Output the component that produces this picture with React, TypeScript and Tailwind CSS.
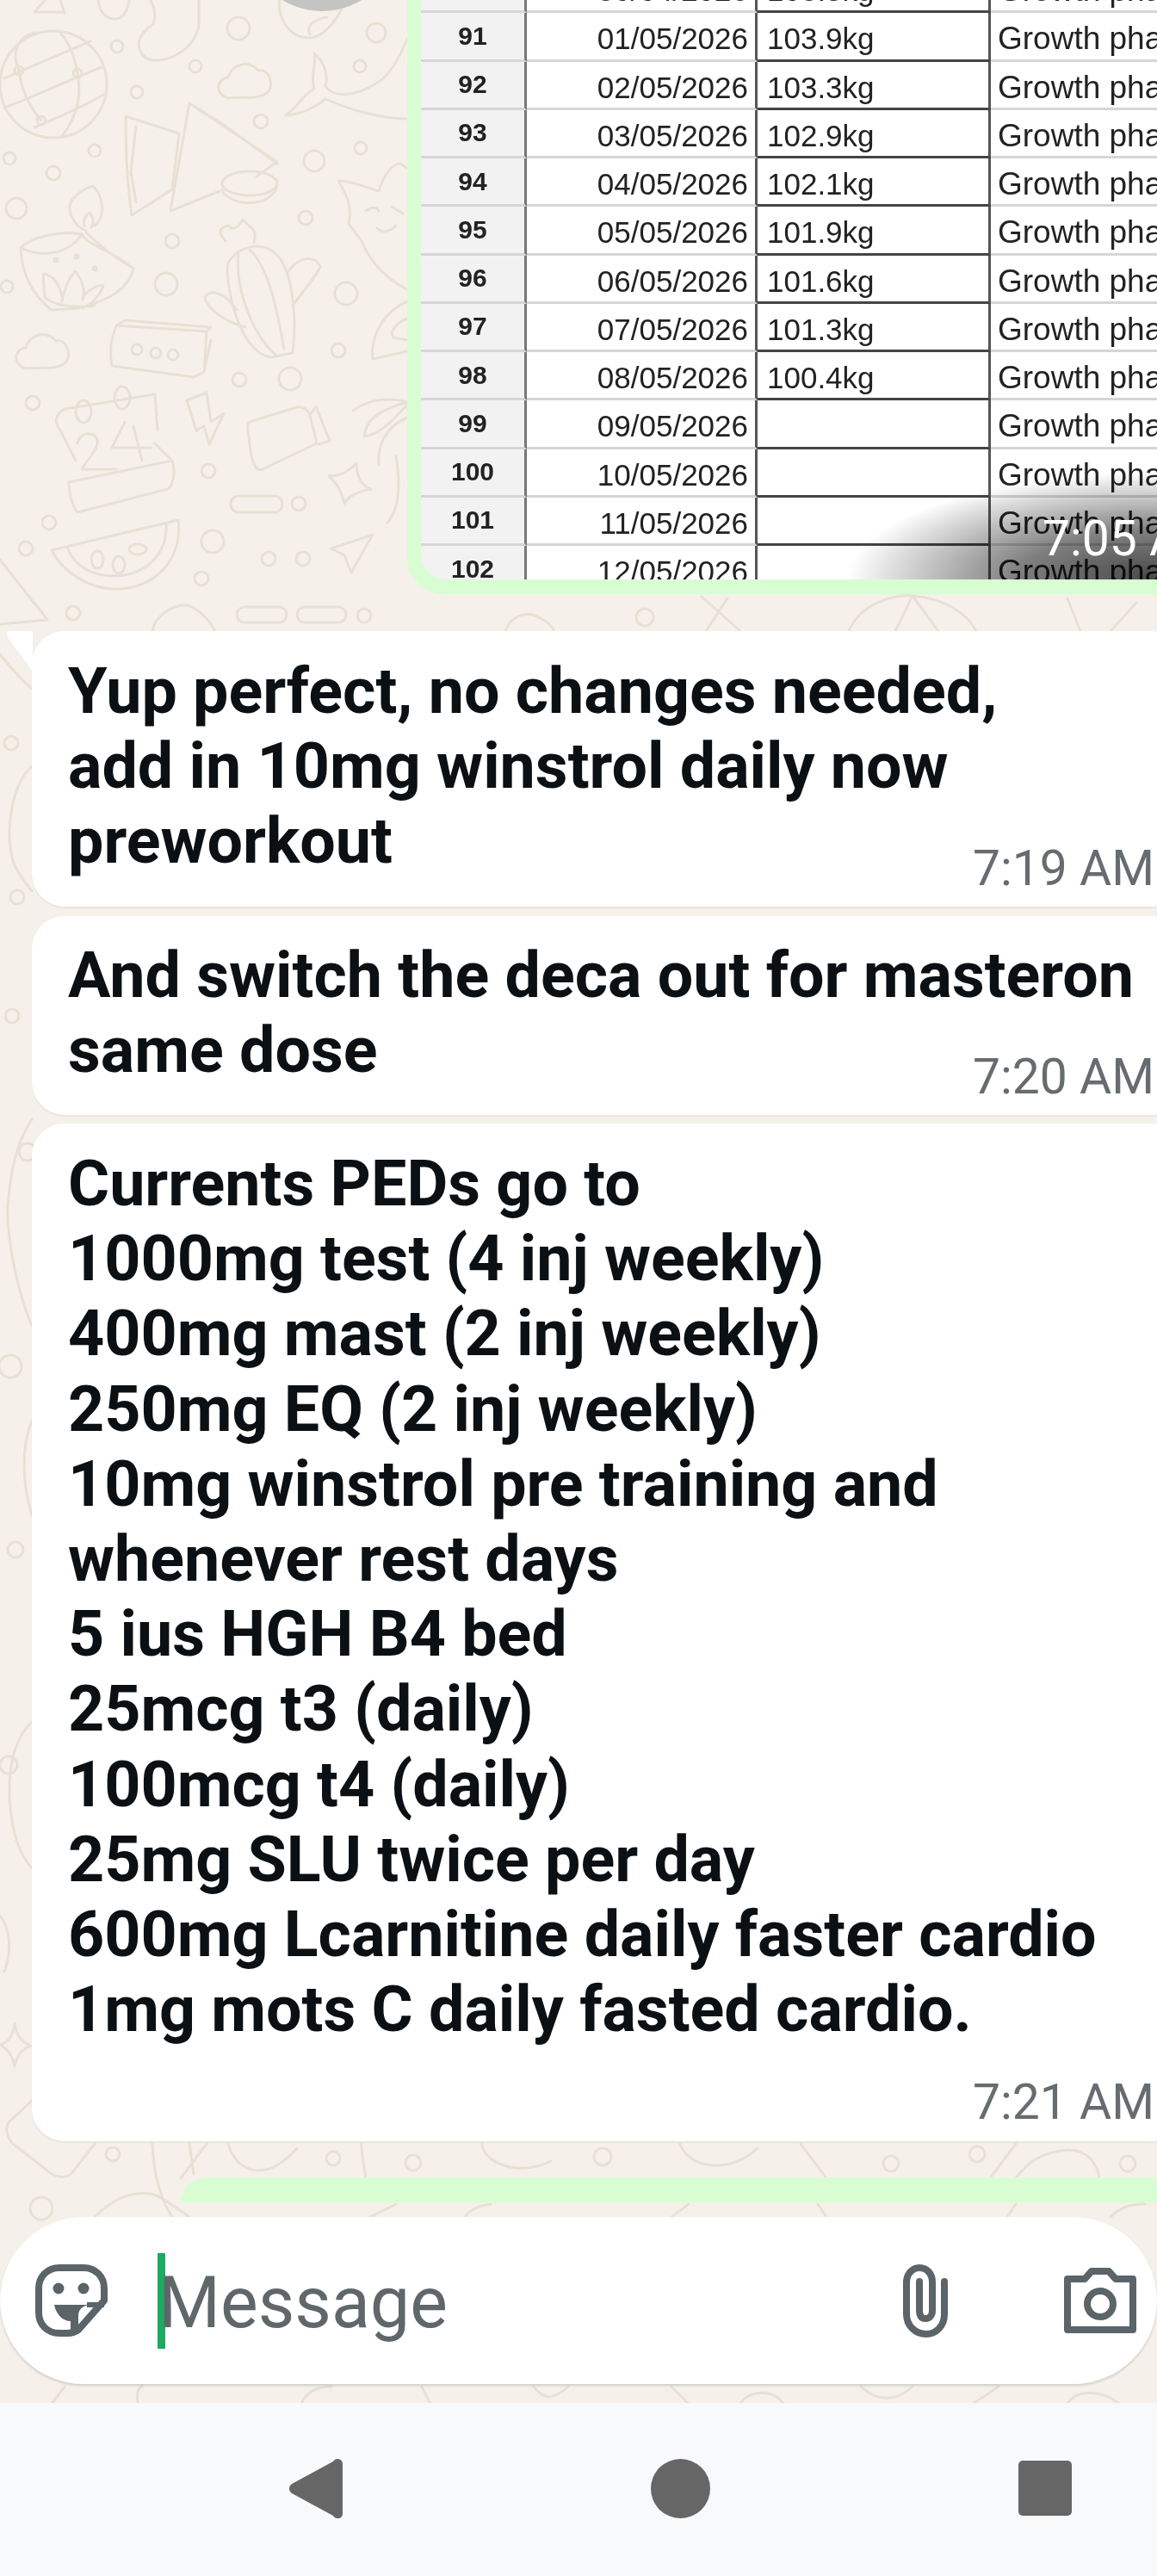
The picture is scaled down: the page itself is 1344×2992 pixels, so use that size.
import React from "react";

type Row = { no: number; date: string; weight: string };

const rows: Row[] = [
    { no: 90, date: "30/04/2026", weight: "103.5kg" },
    { no: 91, date: "01/05/2026", weight: "103.9kg" },
    { no: 92, date: "02/05/2026", weight: "103.3kg" },
    { no: 93, date: "03/05/2026", weight: "102.9kg" },
    { no: 94, date: "04/05/2026", weight: "102.1kg" },
    { no: 95, date: "05/05/2026", weight: "101.9kg" },
    { no: 96, date: "06/05/2026", weight: "101.6kg" },
    { no: 97, date: "07/05/2026", weight: "101.3kg" },
    { no: 98, date: "08/05/2026", weight: "100.4kg" },
    { no: 99, date: "09/05/2026", weight: "" },
    { no: 100, date: "10/05/2026", weight: "" },
    { no: 101, date: "11/05/2026", weight: "" },
    { no: 102, date: "12/05/2026", weight: "" },
];

const rings: [number, number, number][] = [
    [277, 33, 13], [136, 54, 7], [227, 77, 7], [159, 107, 7], [437, 38, 11], [418, 77, 7], [303, 141, 8],
    [419, 172, 7], [365, 187, 12], [110, 175, 7], [11, 184, 7], [62, 201, 8], [19, 242, 12], [200, 280, 8],
    [355, 253, 8], [8, 333, 7], [193, 330, 13], [402, 341, 13], [393, 407, 8], [278, 441, 8], [337, 440, 13],
    [38, 468, 8], [242, 547, 8], [347, 585, 8], [57, 607, 8], [30, 637, 8], [247, 629, 13], [312, 649, 8],
    [352, 649, 8], [234, 672, 8], [85, 712, 8], [423, 715, 8], [749, 717, 10], [13, 863, 8], [20, 1042, 8],
    [32, 1338, 10], [12, 1587, 13], [14, 1180, 8], [18, 1800, 9], [10, 2050, 10], [131, 2502, 8], [387, 2507, 8],
    [48, 2565, 13], [1035, 2513, 9], [1135, 2502, 9], [1310, 2513, 9], [480, 2512, 9], [700, 2505, 10],
];

// wallpaper line drawings, sits behind every bubble
function Wallpaper() {
    return (
        <svg className="absolute left-0 top-0" width="1344" height="2800" fill="none" stroke="#e8e0d5" strokeWidth="3" strokeLinecap="round" strokeLinejoin="round">
            {rings.map(([cx, cy, r]) => <circle key={`${cx}-${cy}`} cx={cx} cy={cy} r={r} />)}
            {/* globe */}
            <circle cx="62" cy="98" r="62" />
            <path d="M5 91C40 75 70 63 105 48M5 125C40 112 75 95 118 78M40 148C70 135 95 125 120 110M22 82C12 60 22 42 40 38M22 82C25 105 35 125 48 140M90 85C86 62 80 50 70 38M90 85C95 110 90 135 72 158" />
            <circle cx="22" cy="82" r="5" /><circle cx="90" cy="85" r="5" /><circle cx="48" cy="140" r="5" />
            {/* sock and the bits cut off at the top */}
            <path d="M175 0C182 15 180 22 178 28C160 40 155 55 170 68C190 76 225 60 231 30V0" />
            <path d="M40 14L52 0M75 15L70 0M40 14H75M114 0C115 15 125 22 133 22C142 22 148 15 150 0" />
            <path d="M325 0C322 20 335 43 358 44C375 44 390 25 397 10M360 40C355 30 365 22 380 20" />
            {/* clouds */}
            <path d="M265 114C250 110 250 92 265 90C268 76 288 68 300 82C312 78 320 100 310 108C300 116 280 112 265 114Z" />
            <path transform="translate(-235 314)" d="M265 114C250 110 250 92 265 90C268 76 288 68 300 82C312 78 320 100 310 108C300 116 280 112 265 114Z" />
            {/* whale */}
            <path d="M332 134C345 125 352 110 365 103C360 90 368 72 365 62C375 70 382 85 378 100C385 112 410 115 440 95C455 85 465 65 473 45M332 134C350 133 365 125 378 115C400 125 440 138 473 138" />
            {/* megaphone */}
            <path d="M146 135L208 155L200 220L153 250C148 215 146 175 146 135ZM158 147L152 200L158 235M220 120L322 188C312 195 305 200 298 205M220 120L198 245L255 222M225 123L260 145L322 190" />
            <ellipse cx="290" cy="213" rx="32" ry="14" />
            <path d="M258 220C262 238 315 245 322 215" />
            {/* diya */}
            <path d="M100 268C85 262 78 245 82 235C88 225 100 218 108 216C118 225 125 250 110 262M98 262C96 255 100 250 104 247C108 252 110 258 106 264" />
            <path d="M24 288C40 272 80 268 95 272C100 285 130 290 155 312C150 335 125 350 90 358L60 360C40 345 25 320 24 288ZM24 288C50 300 80 295 95 272M100 270C115 285 135 300 155 312" />
            <path d="M50 318C65 320 70 335 72 345M72 350C75 335 80 322 88 315C95 325 100 338 96 348M96 345C105 335 115 330 120 332C115 345 105 355 95 358M50 318L52 345C60 355 90 358 110 355" />
            <circle cx="65" cy="302" r="2" /><circle cx="89" cy="298" r="2" /><circle cx="110" cy="312" r="2" />
            {/* cactus */}
            <path d="M265 305C260 320 275 410 315 415L340 410C345 370 340 320 325 300C310 280 280 282 265 305ZM277 295C273 330 290 385 320 412M290 290C312 310 322 360 330 405M340 355C350 340 365 325 372 310C368 298 350 295 335 315M285 380C265 375 240 360 238 345C245 335 262 340 275 360M262 280C252 268 255 265 265 262C272 270 280 260 282 255C290 265 300 265 295 282" />
            {/* block with dots */}
            <path d="M135 378L240 385L237 432L225 438L130 425C127 410 128 395 135 378ZM135 378L145 372L245 380L240 385M237 432L245 395" />
            <circle cx="159" cy="406" r="6" /><circle cx="181" cy="410" r="6" /><circle cx="201" cy="412" r="6" />
            {/* calendar */}
            <path d="M75 475L180 458L183 500M75 475C65 480 62 490 70 500L88 535M80 560L200 535C205 550 200 565 195 568L90 595C85 590 80 575 80 560ZM180 515L200 535" />
            <ellipse cx="97" cy="478" rx="9" ry="13" /><ellipse cx="142" cy="462" rx="9" ry="13" />
            <path d="M90 515C92 500 115 500 113 515C112 525 100 535 95 545H135M145 490L130 520H175M155 495L165 535" />
            {/* bolt, jar, star */}
            <path d="M217 465L240 456L245 490L260 480L243 516L237 495L228 500Z" />
            <path d="M290 490L345 473C352 472 358 476 360 482L368 515L305 545C298 548 295 540 292 530L288 500C287 495 288 490 290 490ZM360 482L367 472L383 512L370 516" />
            <path d="M382 553C395 553 405 548 414 538C414 552 420 565 431 568C420 570 405 575 400 585C398 575 393 562 382 553Z" />
            <rect x="268" y="576" width="60" height="19" rx="9" />
            {/* palm, fan, fox */}
            <path d="M410 477C430 462 455 462 473 467M473 467C445 475 425 485 423 507C440 505 455 490 473 470M440 540C438 515 450 495 473 485M460 530C465 560 465 590 450 607" />
            <path d="M433 417C430 385 450 360 473 350M433 417L473 408M473 370C460 375 452 385 457 392L473 395" />
            <path d="M393 210C410 210 425 218 440 222C445 205 455 190 465 190L472 195M393 210C402 225 410 240 405 260L420 280C430 305 450 325 473 336M425 245C432 240 438 240 440 245M455 240L468 248M438 265C445 272 455 268 460 262" />
            {/* watermelon, paper plane */}
            <path d="M60 639L207 604C212 640 190 680 140 684C100 686 70 660 60 639ZM78 636C90 665 120 672 145 668C175 662 195 640 193 607" />
            <ellipse cx="113" cy="650" rx="7" ry="10" /><ellipse cx="138" cy="656" rx="7" ry="10" /><ellipse cx="160" cy="638" rx="10" ry="6" />
            <path d="M385 637L433 621L408 665L400 645Z" />
            {/* strip between the picture and the first message */}
            <path d="M0 650L43 705M0 725L55 720L40 700M177 733C180 715 200 703 215 703C225 703 240 715 250 733" />
            <rect x="275" y="705" width="58" height="18" rx="9" /><rect x="345" y="705" width="57" height="18" rx="9" />
            <path d="M587 733C592 718 605 712 618 714C630 718 640 725 644 733M815 693L860 733M820 733L845 695M986 733C1000 700 1040 690 1060 692C1100 695 1125 715 1134 733M1060 692L1040 733M1060 692L1090 733M1240 695L1255 733M1290 733L1320 700" />
            {/* left edge beside the bubbles */}
            <path d="M37 890C15 910 5 960 15 1000C20 1015 30 1025 37 1035M0 760C8 770 20 785 37 800M37 1300C25 1320 15 1340 10 1390C5 1430 20 1500 37 1540M37 1650C25 1680 25 1720 37 1760M37 2000C15 2020 8 2060 12 2100C16 2140 28 2160 37 2170M0 2225C12 2240 14 2265 5 2290" />
            <path d="M0 2375C10 2372 15 2365 17 2350C19 2365 25 2372 36 2376C25 2380 19 2390 17 2400C15 2390 10 2380 0 2375Z" />
            {/* strip under the last message */}
            <path d="M37 2440L10 2465C5 2475 10 2485 15 2490L60 2525C70 2530 80 2530 85 2522L110 2490M177 2490C178 2530 190 2560 200 2575M220 2490L225 2525M265 2490C275 2525 310 2535 345 2495M420 2490C420 2510 425 2520 425 2535M110 2575C130 2555 150 2545 175 2548C190 2552 205 2565 220 2575M240 2490L210 2530" />
            <path d="M1180 2530C1195 2510 1210 2500 1240 2497C1265 2497 1275 2515 1277 2530M560 2490C560 2510 600 2530 640 2510M790 2490C800 2520 850 2525 880 2495M930 2490L960 2530M1180 2490L1150 2530" />
            <path d="M430 2575L460 2560M540 2575C545 2568 555 2562 570 2560M780 2575L800 2560M950 2560L960 2575M1180 2560L1170 2575M1290 2575C1300 2565 1310 2560 1330 2560" />
            <path d="M60 2792L75 2772M160 2790C158 2780 160 2775 165 2771M350 2792C355 2780 365 2772 385 2772M500 2792L490 2772M620 2772C630 2785 640 2790 660 2772M780 2772L800 2792M860 2792C870 2775 900 2775 910 2792M1000 2772C1020 2790 1040 2790 1060 2772M1130 2792L1160 2772M1240 2792C1250 2775 1280 2775 1300 2792" />
        </svg>
    );
}

function SheetRow({ row }: { row: Row }) {
    return (
        <div className="grid grid-cols-[123px_268px_271px_1fr] h-[56.25px] text-[35px] leading-none text-[#222]">
            <div className="flex items-center justify-center bg-[#f2f2f2] border-r-[3px] border-b-[3px] border-r-[#777] border-b-[#d6d6d6] text-[30px] font-bold">{row.no}</div>
            <div className="flex items-center justify-end pt-[6px] pr-[8px] bg-white border-r-[3px] border-b-[3px] border-r-[#555] border-b-[#d6d6d6]">{row.date}</div>
            <div className="flex items-center pt-[6px] pl-[11px] bg-white border-r-[3px] border-b-[3px] border-r-[#555] border-b-[#444]">{row.weight}</div>
            <div className="flex items-center pt-[6px] pl-[8px] bg-white border-b-[3px] border-b-[#d6d6d6] text-[37px] whitespace-nowrap overflow-hidden">Growth phase</div>
        </div>
    );
}

function ImageBubble() {
    return (
        <div className="relative ml-[473px] h-[690px] shrink-0 bg-[#d9fdd3] rounded-bl-[42px] pl-[16px] pb-[17px]">
            <div className="relative h-full overflow-hidden rounded-bl-[28px]">
                <div className="-mt-[41px] blur-[0.6px] font-['Liberation_Sans',sans-serif]">
                    {rows.map(row => <SheetRow key={row.no} row={row} />)}
                </div>
                <div className="absolute right-0 bottom-0 w-[360px] h-[125px] bg-[radial-gradient(ellipse_farthest-side_at_bottom_right,rgba(0,0,0,0.72)_0%,rgba(0,0,0,0.5)_45%,rgba(0,0,0,0)_100%)]" />
                <span className="absolute left-[722px] bottom-[15px] text-[57px] leading-[64px] text-white whitespace-nowrap font-['Roboto',sans-serif]">7:05 AM</span>
            </div>
        </div>
    );
}

function TextBubble({ lines, time, tail, timeClass, className }: { lines: string[]; time: string; tail?: boolean; timeClass: string; className: string }) {
    return (
        <div className={`relative ml-[37px] -mr-[30px] shrink-0 bg-white rounded-[38px] pl-[42px] pr-[33px] shadow-[0_2px_2px_rgba(0,0,0,0.05)] ${className}`}>
            {tail && (
                <svg className="absolute -left-[29px] top-0" width="30" height="48" viewBox="0 0 30 48">
                    <path d="M30 0H3C0 0 -1 4 1 7L30 47Z" fill="#fff" />
                </svg>
            )}
            <div className="text-[73.6px] leading-[87.2px] font-bold text-[#0b1014] whitespace-nowrap">
                {lines.map(line => <div key={line}>{line}</div>)}
            </div>
            <div className={`flex justify-end text-[57px] leading-[64px] text-[#666c70] ${timeClass}`}>{time}</div>
        </div>
    );
}

function StickerIcon() {
    return (
        <svg width="85" height="85" viewBox="0 0 85 85" fill="none" stroke="#5b6468" strokeWidth="8">
            <path d="M28 4H56C70 4 80 14 80 28V42L50 76C46 79 42 80 38 80H28C14 80 4 70 4 56V28C4 14 14 4 28 4Z" strokeLinejoin="round" />
            <circle cx="27" cy="28" r="6.5" fill="#5b6468" stroke="none" />
            <circle cx="56" cy="28" r="6.5" fill="#5b6468" stroke="none" />
            <path d="M22 47H64C55 48 50 52 50 60V78H41V66C32 66 24 58 22 47Z" fill="#5b6468" stroke="none" />
            <path d="M60 47H80" strokeWidth="6" />
        </svg>
    );
}

function ClipIcon() {
    return (
        <svg width="53" height="85" viewBox="0 0 53 85" fill="none" stroke="#5b6468" strokeWidth="8" strokeLinecap="round">
            <path d="M48 20V58C48 72 38 81 27 81C14 81 4 71 4 58V21C4 11 11 4 19 4C28 4 34 11 34 21V54C34 59 31 63 26 63C21 63 19 59 19 54V20" />
        </svg>
    );
}

function CameraIcon() {
    return (
        <svg width="84" height="76" viewBox="0 0 84 76" fill="none" stroke="#5b6468" strokeWidth="8" strokeLinejoin="round">
            <path d="M4 13H24L32 4H52L60 13H80V72H4Z" />
            <circle cx="42" cy="42" r="15" />
        </svg>
    );
}

export default function App() {
    return (
        <div className="relative w-[1344px] h-[2992px] overflow-hidden flex flex-col bg-[#f5f1ea] font-['Roboto',sans-serif]">
            <Wallpaper />
            <div className="absolute left-[286px] -top-[163px] w-[176px] h-[176px] rounded-full bg-[#c4c4c2]" />
            <ImageBubble />
            <TextBubble
                tail
                className="mt-[43px] pt-[27px] pb-[12px]"
                timeClass="-mt-[45px]"
                time="7:19 AM"
                lines={["Yup perfect, no changes needed,", "add in 10mg winstrol daily now", "preworkout"]}
            />
            <TextBubble
                className="mt-[11px] pt-[26px] pb-[12px]"
                timeClass="-mt-[45px]"
                time="7:20 AM"
                lines={["And switch the deca out for masteron", "same dose"]}
            />
            <TextBubble
                className="mt-[10px] pt-[27px] pb-[13px]"
                timeClass="mt-[32px]"
                time="7:21 AM"
                lines={[
                    "Currents PEDs go to",
                    "1000mg test (4 inj weekly)",
                    "400mg mast (2 inj weekly)",
                    "250mg EQ (2 inj weekly)",
                    "10mg winstrol pre training and",
                    "whenever rest days",
                    "5 ius HGH B4 bed",
                    "25mcg t3 (daily)",
                    "100mcg t4 (daily)",
                    "25mg SLU twice per day",
                    "600mg Lcarnitine daily faster cardio",
                    "1mg mots C daily fasted cardio.",
                ]}
            />
            <div className="relative mt-[42px] ml-[210px] h-[29px] shrink-0 bg-[#d9fdd3] rounded-tl-[40px]" />
            <div className="relative mt-[17px] h-[194px] shrink-0 flex items-center bg-white rounded-full pl-[41px] pr-[24px] shadow-[0_2px_3px_rgba(0,0,0,0.15)]">
                <StickerIcon />
                <div className="ml-[57px] w-[9px] h-[111px] shrink-0 bg-[#1daa61]" />
                <span className="-ml-[8px] mt-[6px] text-[82.5px] leading-none text-[#5f676a]">Message</span>
                <div className="ml-auto"><ClipIcon /></div>
                <div className="ml-[134px]"><CameraIcon /></div>
            </div>
            <div className="relative mt-[22px] flex-1 flex items-start bg-[#f8f9fb] pt-[65px] pl-[336px]">
                <svg width="62" height="69" viewBox="0 0 62 69" fill="#666">
                    <path d="M56 0C60 0 62 3 62 6V63C62 67 60 69 56 69C54 69 52 68 51 66L3 40C-1 37 -1 32 3 29L51 3C52 1 54 0 56 0Z" />
                </svg>
                <div className="ml-[358px] w-[69px] h-[69px] rounded-full bg-[#666]" />
                <div className="ml-[358px] mt-[2px] w-[62px] h-[64px] rounded-[5px] bg-[#666]" />
            </div>
        </div>
    );
}
